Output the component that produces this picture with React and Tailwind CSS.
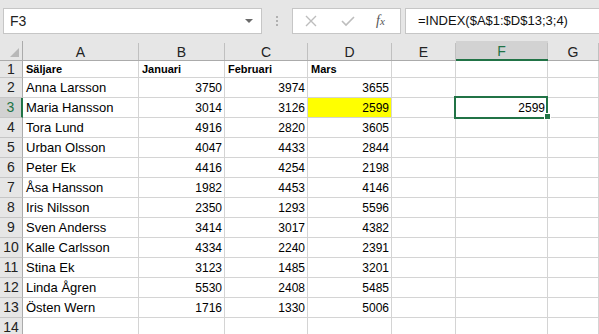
import React from "react";

const rows = [
  ["Anna Larsson", 3750, 3974, 3655],
  ["Maria Hansson", 3014, 3126, 2599],
  ["Tora Lund", 4916, 2820, 3605],
  ["Urban Olsson", 4047, 4433, 2844],
  ["Peter Ek", 4416, 4254, 2198],
  ["Åsa Hansson", 1982, 4453, 4146],
  ["Iris Nilsson", 2350, 1293, 5596],
  ["Sven Anderss", 3414, 3017, 4382],
  ["Kalle Carlsson", 4334, 2240, 2391],
  ["Stina Ek", 3123, 1485, 3201],
  ["Linda Ågren", 5530, 2408, 5485],
  ["Östen Wern", 1716, 1330, 5006],
];

const cols = ["A", "B", "C", "D", "E", "F", "G"];
const gridCols = "grid grid-cols-[23px_116px_86px_83px_84px_64px_92px_1fr]";

function ColHeader({ label }) {
  const active = label === "F";
  return (
    <div
      className={
        "h-[20px] border-b border-[#ababab] pt-[2px] " +
        (active ? "bg-[#d2d2d2] border-b-2 border-b-[#217346]" : "")
      }
    >
      <div
        className={
          "h-full flex items-center justify-center border-r border-[#c0c0c0] text-[14px] leading-none " +
          (active ? "text-[#217346]" : "text-[#222]")
        }
      >
        {label}
      </div>
    </div>
  );
}

function RowHeader({ n, h }) {
  const active = n === 3;
  return (
    <div
      className={
        h +
        " flex items-center justify-center border-b border-[#c6c6c6] text-[14px] " +
        (active
          ? "bg-[#d2d2d2] text-[#217346] border-r-2 border-r-[#217346]"
          : "bg-[#e6e6e6] text-[#222] border-r border-r-[#ababab]")
      }
    >
      {n}
    </div>
  );
}

function Cell({ children, h, right, bold, yellow }) {
  return (
    <div
      className={
        h +
        " flex items-center border-r border-b border-[#d4d4d4] overflow-hidden whitespace-nowrap " +
        (right ? "justify-end pr-[2px] text-[12px] " : "pl-[3px] ") +
        (bold ? "font-bold text-[11px] " : right ? "" : "text-[13px] ") +
        (yellow ? "bg-[#ffff00]" : "bg-white")
      }
    >
      {children}
    </div>
  );
}

export default function App() {
  return (
    <div className="w-[599px] h-[334px] overflow-hidden bg-white text-black font-['Liberation_Sans',Arial,sans-serif]">
      {/* formula bar */}
      <div className="h-[41px] bg-[#e6e6e6] flex items-start pt-[8px] pl-[3px]">
        <div className="w-[259px] h-[26px] bg-white border border-[#c6c6c6] flex items-center pl-[6px] pr-[8px] text-[14px] text-[#222]">
          <span className="flex-1">F3</span>
          <span className="w-0 h-0 border-l-[4px] border-r-[4px] border-t-[4px] border-l-transparent border-r-transparent border-t-[#6a6a6a]" />
        </div>
        <div className="w-[30px] h-[26px] flex flex-col items-center justify-center gap-[2px]">
          <span className="w-[2px] h-[2px] bg-[#b0b0b0]" />
          <span className="w-[2px] h-[2px] bg-[#b0b0b0]" />
          <span className="w-[2px] h-[2px] bg-[#b0b0b0]" />
        </div>
        <div className="w-[109px] h-[26px] bg-white border border-[#c6c6c6] flex items-center">
          <svg width="12" height="12" viewBox="0 0 12 12" className="ml-[12px]">
            <path d="M1 1 L11 11 M11 1 L1 11" stroke="#bdbdbd" strokeWidth="1.4" fill="none" />
          </svg>
          <svg width="14" height="12" viewBox="0 0 14 12" className="ml-[24px]">
            <path d="M1 6 L5 10 L13 2" stroke="#bdbdbd" strokeWidth="1.6" fill="none" />
          </svg>
          <span className="ml-[21px] text-[14px] italic text-[#555] font-['Liberation_Serif',serif] leading-none">
            f<span className="text-[11px]">x</span>
          </span>
        </div>
        <div className="ml-[4px] flex-1 h-[26px] bg-white border border-r-0 border-[#c6c6c6] flex items-center pl-[12px] text-[13px] text-[#111]">
          =INDEX($A$1:$D$13;3;4)
        </div>
      </div>

      {/* sheet */}
      <div className="relative">
        <div className={gridCols}>
          <div className="h-[20px] bg-[#e6e6e6] border-b border-r border-[#ababab] flex items-end justify-end pr-[3px] pb-[3px]">
            <svg width="9" height="9" viewBox="0 0 9 9">
              <path d="M9 0 L9 9 L0 9 Z" fill="#b8b8b8" />
            </svg>
          </div>
          {cols.map((c) => (
            <div key={c} className="bg-[#e6e6e6]">
              <ColHeader label={c} />
            </div>
          ))}

          <RowHeader n={1} h="h-[17px]" />
          <Cell h="h-[17px]" bold>Säljare</Cell>
          <Cell h="h-[17px]" bold>Januari</Cell>
          <Cell h="h-[17px]" bold>Februari</Cell>
          <Cell h="h-[17px]" bold>Mars</Cell>
          <Cell h="h-[17px]" />
          <Cell h="h-[17px]" />
          <Cell h="h-[17px]" />

          {rows.map((r, i) => (
            <React.Fragment key={r[0]}>
              <RowHeader n={i + 2} h="h-[20px]" />
              <Cell h="h-[20px]">{r[0]}</Cell>
              <Cell h="h-[20px]" right>{r[1]}</Cell>
              <Cell h="h-[20px]" right>{r[2]}</Cell>
              <Cell h="h-[20px]" right yellow={i === 1}>{r[3]}</Cell>
              <Cell h="h-[20px]" />
              <Cell h="h-[20px]" right>{i === 1 ? 2599 : ""}</Cell>
              <Cell h="h-[20px]" />
            </React.Fragment>
          ))}

          <RowHeader n={14} h="h-[20px]" />
          <Cell h="h-[20px]" />
          <Cell h="h-[20px]" />
          <Cell h="h-[20px]" />
          <Cell h="h-[20px]" />
          <Cell h="h-[20px]" />
          <Cell h="h-[20px]" />
          <Cell h="h-[20px]" />
        </div>

        {/* active cell F3 */}
        <div className="absolute left-[454px] top-[55px] w-[94px] h-[23px] border-2 border-[#217346] pointer-events-none" />
        <div className="absolute left-[544px] top-[72px] w-[7px] h-[7px] bg-[#217346] border border-white pointer-events-none" />
      </div>
    </div>
  );
}
